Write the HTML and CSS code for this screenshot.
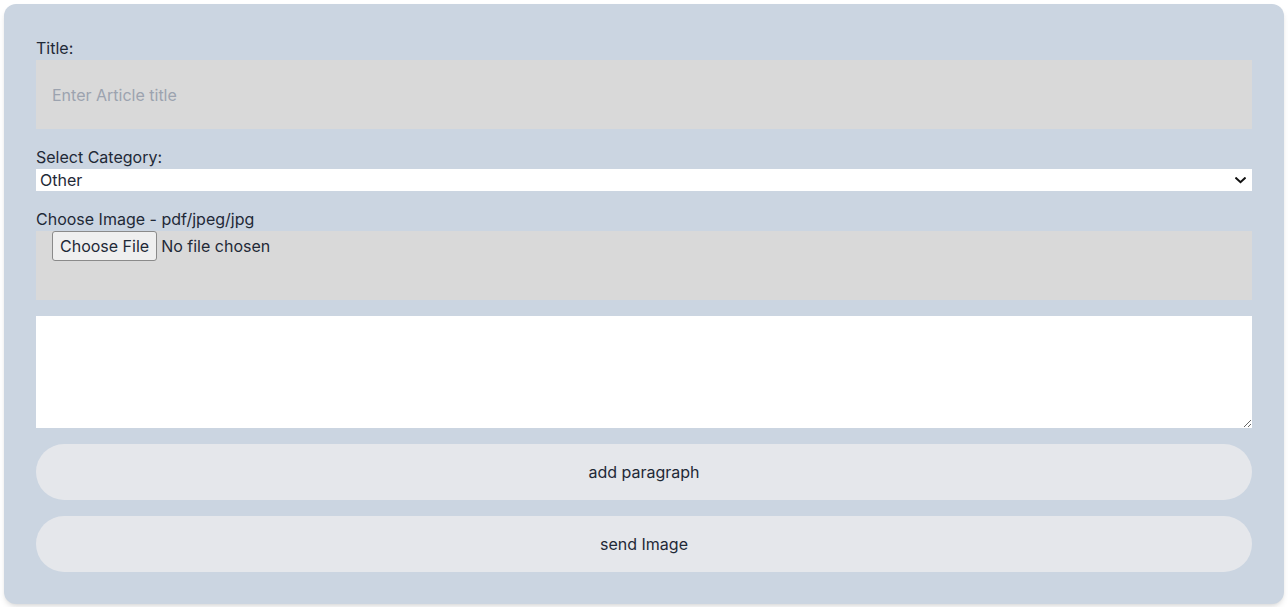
FILE: index.html
```html
<!DOCTYPE html>
<html lang="en">
<head>
<meta charset="utf-8">
<title>New Article</title>
<link rel="stylesheet" href="styles.css">
</head>
<body>
<div class="page">
  <form class="card">
    <div class="field">
      <label class="label" for="title">Title:</label>
      <input class="text-input" id="title" type="text" placeholder="Enter Article title">
    </div>
    <div class="field">
      <label class="label" for="category">Select Category:</label>
      <div class="select-wrap">
        <select class="select" id="category">
          <option>Other</option>
          <option>News</option>
          <option>Sport</option>
        </select>
        <svg class="chevron" width="11" height="7" viewBox="0 0 11 7" aria-hidden="true">
          <path d="M1.2 1.2 L5.5 5.2 L9.8 1.2" fill="none" stroke="#111" stroke-width="2" stroke-linecap="square"/>
        </svg>
      </div>
    </div>
    <div class="field">
      <label class="label" for="image">Choose Image - pdf/jpeg/jpg</label>
      <input class="file-input" id="image" type="file">
    </div>
    <textarea class="textarea"></textarea>
    <button type="button" class="pill">add paragraph</button>
    <button type="button" class="pill">send Image</button>
  </form>
</div>
</body>
</html>
```
FILE: styles.css
```css
* { box-sizing: border-box; }
html, body { margin: 0; padding: 0; background: #ffffff; }
body {
  font-family: Inter, "Noto Sans", sans-serif;
  font-size: 16px;
  color: #1f2937;
}
.page { padding: 4px; }
.card {
  width: 1280px;
  height: 600px;
  background: #cbd5e1;
  border-radius: 12px;
  box-shadow: 0 4px 6px -1px rgba(0,0,0,0.1), 0 2px 4px -2px rgba(0,0,0,0.1);
  padding: 32px;
  display: flex;
  flex-direction: column;
  gap: 16px;
}
.field { display: flex; flex-direction: column; }
.label { display: block; line-height: 24px; height: 24px; font-size: 16px; }
.text-input {
  height: 69px;
  border: none;
  outline: none;
  background: #d9d9d9;
  padding: 0 16px;
  font-family: inherit;
  font-size: 16px;
  color: #1f2937;
}
.text-input::placeholder { color: #9ca3af; }
.select-wrap { position: relative; height: 22px; }
.select {
  -webkit-appearance: none;
  appearance: none;
  width: 100%;
  height: 22px;
  border: none;
  border-radius: 0;
  background: #ffffff;
  font-family: inherit;
  font-size: 16px;
  color: #1f2937;
  padding: 0 0 0 4px;
  outline: none;
  display: block;
}
.chevron {
  position: absolute;
  right: 6px;
  top: 8px;
  pointer-events: none;
}
.file-input {
  height: 69px;
  background: #d9d9d9;
  padding: 0 16px;
  font-family: inherit;
  font-size: 16px;
  color: #1f2937;
}
.file-input::file-selector-button {
  height: 30px;
  margin: 0 4px 0 0;
  padding: 0 7px;
  border: 1px solid #8a8a8a;
  border-radius: 3px;
  background: #efefef;
  font-family: inherit;
  font-size: 16px;
  color: #1f2937;
}
.textarea {
  height: 112px;
  border: none;
  outline: none;
  background: #ffffff;
  font-family: inherit;
  font-size: 16px;
  resize: vertical;
  display: block;
}
.pill {
  height: 56px;
  border: none;
  border-radius: 28px;
  background: #e5e7eb;
  font-family: inherit;
  font-size: 16px;
  color: #1f2937;
  cursor: pointer;
}
```
